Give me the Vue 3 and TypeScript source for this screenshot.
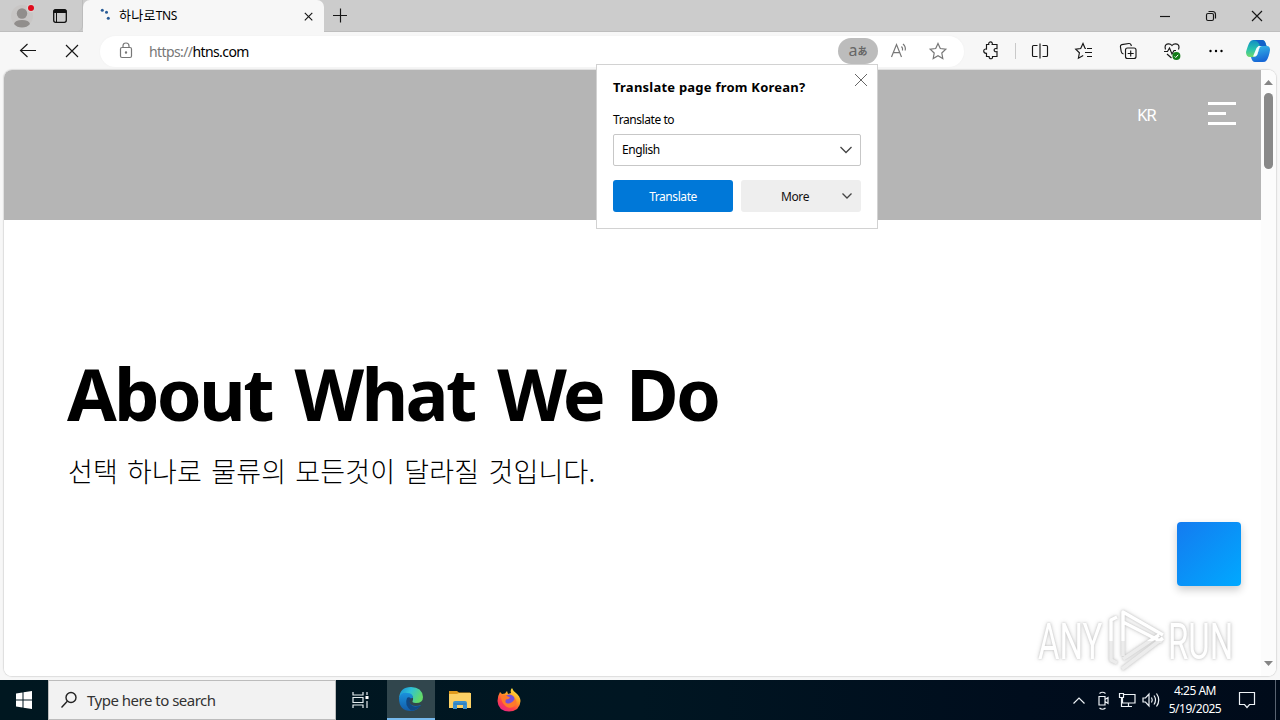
<script setup lang="ts">
interface TrayIcon { name: string; paths: string[] }

const menuBars: string[] = ['wide', 'short', 'wide']
const tray: TrayIcon[] = [
  { name: 'expand', paths: ['M6.500 15.500l5.500-5.500 5.500 5.500'] },
  { name: 'meet', paths: ['M8 8.500h6v8.500h-6zM14 11.500l3-2v6l-3-2M8.500 5.500q3-2.500 6 0M8.500 20q3 2.500 6 0'] },
  { name: 'network', paths: ['M9 6.500h11v8.500H7.500v-5M13.500 15v3.500M10 18.500h7M4.500 5.500h4v4h-4zM6.500 9.500v9H10'] },
  { name: 'volume', paths: ['M4 10h2.500l3.500-4v12l-3.500-4H4zM12.500 9.500q1.500 2.500 0 5M15 7.500q3 4.500 0 9M17.500 5.500q4.500 6.500 0 13'] },
]
</script>

<template>
  <div class="screen">
    <div class="tabstrip">
      <div class="tab-tools">
        <svg class="profile" width="24" height="28" viewBox="0 0 24 28">
          <circle cx="12" cy="15" r="11" fill="#c8c6c5" />
          <circle cx="12" cy="12.500" r="5.200" fill="#918e8c" />
          <path d="M4 23q1-4 8-4t8 4q-3 3.500-8 3.500t-8-3.500z" fill="#918e8c" />
          <circle cx="21" cy="7" r="4.300" fill="#d8d4d2" />
          <circle cx="21" cy="7" r="3" fill="#e00b1c" />
        </svg>
        <svg class="tabs-icon" width="16" height="16" viewBox="0 0 16 16">
          <rect x="1.700" y="1.700" width="12.600" height="12.600" rx="2" fill="none" stroke="#111" stroke-width="1.300" />
          <path d="M1.500 4V3q0-1.500 1.500-1.500h10q1.500 0 1.500 1.500v2H5v9H4V5H1.500z" fill="#111" />
        </svg>
      </div>
      <div class="tab">
        <svg width="16" height="16" viewBox="0 0 16 16" fill="#285b96">
          <circle cx="5.300" cy="2.300" r="1.500" /><circle cx="9.500" cy="4.200" r="1.500" /><circle cx="11.300" cy="10.200" r="1.500" />
        </svg>
        <span class="tab-title"><span class="hangul">하나로</span>TNS</span>
        <svg class="tab-close" width="16" height="16" viewBox="0 0 16 16"><path d="M4.800 4.800l7.500 7.500M12.300 4.800l-7.500 7.500" class="line" /></svg>
      </div>
      <svg class="new-tab" width="16" height="16" viewBox="0 0 16 16"><path d="M1 8.500h14M8.500 1.500v14" class="line" /></svg>
      <div class="window-controls">
        <svg width="46" height="32" viewBox="0 0 46 32"><path d="M18 16.500h10" class="line" /></svg>
        <svg width="46" height="32" viewBox="0 0 46 32"><path d="M20.500 11.500h4q3 0 3 3v4" class="line" /><rect x="18.500" y="13.500" width="7" height="7" rx="1.500" class="line" /></svg>
        <svg width="46" height="32" viewBox="0 0 46 32"><path d="M18 11l10 10M28 11L18 21" class="line" /></svg>
      </div>
    </div>

    <div class="toolbar">
      <svg class="back" width="20" height="20" viewBox="0 0 20 20"><path d="M18 9.500H2.500M9.500 3L2.500 9.500l7 6.500" class="line" /></svg>
      <svg class="stop" width="20" height="20" viewBox="0 0 20 20"><path d="M4 4l12 12M16 4L4 16" class="line" /></svg>
      <div class="address">
        <svg class="lock" width="16" height="18" viewBox="0 0 16 18">
          <rect x="2.500" y="5.500" width="11" height="10" rx="1.500" /><path d="M5 5.500V4q0-3 3-3t3 3v1.500" /><circle cx="8" cy="10.500" r=".6" />
        </svg>
        <span class="url"><span class="scheme">https://</span>htns.com</span>
        <span class="translate-pill"><b>a</b><i>あ</i></span>
        <svg class="read" width="40" height="24" viewBox="0 0 40 24"><path d="M13.500 18l5-12.500L23.500 18M15.300 13.700h6.500M23.500 7.500q1.500 1.500 1 4M25 5q3 2.500 2.200 6.500" /></svg>
        <svg class="star" width="40" height="24" viewBox="0 0 40 24"><path d="M20 4.500l2.300 5 5.500.7-4 3.800 1 5.500-4.800-2.700-4.800 2.700 1-5.500-4-3.800 5.500-.7z" /></svg>
      </div>
      <div class="actions">
        <svg viewBox="0 0 44 24"><path class="line" d="M17.500 5.500h2.300q-.5-1.700.6-2.300 1.600-.8 2.600.3.600.8.200 2H28v4.200q-2.500-.6-2.900 1.200.2 2.500 2.900 1.700v4.900H23.500q.3 2-1.200 2.200-2.300.2-2.200-2.200h-2.600v-3.200q-2.500.2-2.800-2.200.2-2.400 2.800-2z" /></svg>
        <i class="divider"></i>
        <svg viewBox="0 0 44 24"><path class="line" d="M19.500 6.500h-4q-1 0-1 1v9q0 1 1 1h4M24.500 6.500h4q1 0 1 1v9q0 1-1 1h-4M22 4.500v15" /></svg>
        <svg viewBox="0 0 44 24"><path class="line" d="M24 9.500l-1-.2-2-4.800-2.300 5-5 .7 3.700 3.600-1 5.400 4.800-2.600M25 9.500h5M23 13.500h7M25 17.500h5" /></svg>
        <svg viewBox="0 0 44 24"><rect class="line" x="19.500" y="9" width="10.500" height="10.500" rx="2" /><path class="line" d="M24.700 11.500v6M21.700 14.500h6M17.500 15q-2-.5-2.300-2.500l-.8-4.800q-.2-1.700 1.400-2.100l7-1.100q1.800-.2 2.300 1.500l.3 1" /></svg>
        <svg viewBox="0 0 44 24"><path class="line" d="M15.500 10.500q-1.300-4 1.500-5.400 3-1 5 1.400 2-2.400 5-1.400 3 1.400 1.500 5.400M14 12.500h3.500l2-3.500 2.500 6 2-3.500h2M17 15l4.500 4" /><circle cx="26.400" cy="17" r="4" fill="#137b19" /><path d="M24.700 17.500l1 1 2.500-2.700" fill="none" stroke="#fff" /></svg>
        <svg viewBox="0 0 44 24"><circle cx="16.500" cy="12" r="1.200" /><circle cx="22" cy="12" r="1.200" /><circle cx="27.500" cy="12" r="1.200" /></svg>
        <svg class="copilot" viewBox="0 0 24 24">
          <defs>
            <linearGradient id="cp-left" x1="0" y1="0" x2="0" y2="1"><stop stop-color="#118cc5" /><stop offset=".55" stop-color="#28c3ad" /><stop offset="1" stop-color="#70d86b" /></linearGradient>
            <linearGradient id="cp-right" x1="0" y1="0" x2=".3" y2="1"><stop stop-color="#36bde8" /><stop offset="1" stop-color="#1768d6" /></linearGradient>
          </defs>
          <path d="M7 1h9q2.500 0 3.500 3l1 3H16q-2 0-3 3l-1.500 5q-1 3-4 3H4q-4 0-4-5 2-7 3.500-9.500Q4.500 1 7 1z" fill="url(#cp-left)" />
          <path d="M7 1h9q2.500 0 3.500 3l1 3H14q-2-6-7-6z" fill="#1262c9" />
          <path d="M16 7h5q3 0 3 4-1 7-3.500 10.500Q19.500 23 17 23H9q-3 0-4-5h2.500q3 0 4-3l1.500-5q1-3 3-3z" fill="url(#cp-right)" />
          <path d="M10.500 9l2-2h2.500q-1.500 1-2 3l-1.700 5.500q-.8 2-2.800 2H7z" fill="#f4fbff" />
        </svg>
      </div>
    </div>

    <div class="page-frame">
      <main class="page">
        <header class="site-header">
          <span class="lang">KR</span>
          <span class="burger"><i v-for="(b, i) in menuBars" :key="i" :class="b"></i></span>
        </header>
        <section class="about">
          <h1>About What We Do</h1>
          <p>선택 하나로 물류의 모든것이 달라질 것입니다.</p>
        </section>
      </main>
      <div class="scrollbar">
        <svg width="9" height="5" viewBox="0 0 9 5"><path d="M0 5L4.500 0 9 5z" fill="#858585" /></svg>
        <div class="thumb"></div>
        <svg width="9" height="5" viewBox="0 0 9 5"><path d="M0 0h9L4.500 5z" fill="#858585" /></svg>
      </div>
    </div>

    <div class="taskbar">
      <svg class="start" width="48" height="40" viewBox="0 0 48 40" fill="#fff"><path d="M16 13.500l6.500-1v7H16zM23.500 12.300L32 11v8.500h-8.500zM16 20.500h6.500v7l-6.500-1zM23.500 20.500H32V29l-8.500-1.300z" /></svg>
      <div class="search">
        <svg width="18" height="18" viewBox="0 0 18 18"><circle cx="11" cy="6.500" r="5" /><path d="M7.300 10.200L1.500 16.500" /></svg>
        <span>Type here to search</span>
      </div>
      <svg class="task view" width="48" height="40" viewBox="0 0 48 40"><path d="M15.500 12v3h10v-3M15.500 28v-3h10v3M15.500 17.500h10v5h-10zM29.500 12v3M29.500 21v7" /><path class="dot" d="M28 16h3v3h-3z" /></svg>
      <div class="task active">
        <svg width="26" height="26" viewBox="0 0 26 26">
          <defs>
            <linearGradient id="edge-top" x1="0" y1="0" x2="1" y2=".4"><stop stop-color="#178bd5" /><stop offset=".5" stop-color="#2fc2d6" /><stop offset="1" stop-color="#62da69" /></linearGradient>
            <linearGradient id="edge-body" x1="0" y1="0" x2="0" y2="1"><stop stop-color="#1a91dc" /><stop offset="1" stop-color="#125ca9" /></linearGradient>
          </defs>
          <path d="M1 12Q2 1 13 1t12 10q0 6-7 6-5 0-3-3 1-5-5-6-6 0-9 4z" fill="url(#edge-top)" />
          <path d="M1 12q2-6 8-5 6 0 6 5-5 0-4 4 3 6 12 3-4 6-10 6Q1 25 1 12z" fill="url(#edge-body)" />
          <path d="M9 12q-3 7 4 12.500 6 0 10-5-8 3-11-2-1-3 1-5-2-2-4-.5z" fill="#124882" />
        </svg>
      </div>
      <div class="task">
        <svg width="22" height="20" viewBox="0 0 22 20"><path d="M0 1h8l2 1.500h11v4H0z" fill="#e09b1d" /><path d="M0 4h8l2-1h12v15H0z" fill="#fcd165" /><path d="M4 19v-6q0-2 2-2h10q2 0 2 2v6h-4v-4H8v4z" fill="#3a91d0" /><path d="M5 14h12" stroke="#2876b5" /></svg>
      </div>
      <div class="task">
        <svg width="24" height="24" viewBox="0 0 24 24">
          <defs><linearGradient id="fox" x1=".8" y1="0" x2=".2" y2="1"><stop stop-color="#fff044" /><stop offset=".4" stop-color="#ff9b22" /><stop offset=".7" stop-color="#ff4248" /><stop offset="1" stop-color="#e4208c" /></linearGradient></defs>
          <path d="M3 4l2 2 3-.5L10 3l1 3 3-1q-1-3 1-5 1 3 4 5 4 3 4.500 8Q23 23 12 23.500 1 23 .5 13 .5 8 3 4z" fill="url(#fox)" />
          <circle cx="12.300" cy="12" r="5.500" fill="#7650d9" /><path d="M4 8q3-2 6 0l3 1.500q-1 2-4 2-2 4 3 4 4-1 6-5 3 4 0 7-4 4-9 1-5-4-5-10.500z" fill="#ff7a29" />
        </svg>
      </div>
      <div class="tray">
        <svg v-for="icon in tray" :key="icon.name" width="24" height="24" viewBox="0 0 24 24"><path v-for="d in icon.paths" :key="d" :d="d" /></svg>
      </div>
      <div class="clock"><span>4:25 AM</span><span>5/19/2025</span></div>
      <svg class="notify" width="24" height="24" viewBox="0 0 24 24"><path d="M4.500 4.500h15v12h-5l-2.500 3-2.500-3h-5z" /></svg>
      <i class="desktop-edge"></i>
    </div>

    <div class="popup">
      <div class="popup-title">Translate page from Korean?</div>
      <svg class="popup-close" width="14" height="14" viewBox="0 0 14 14"><path d="M1 1l12 12M13 1L1 13" /></svg>
      <label>Translate to</label>
      <div class="select"><span>English</span><svg width="14" height="8" viewBox="0 0 14 8"><path d="M1.500 1L7 6.500 12.500 1" /></svg></div>
      <div class="buttons">
        <button class="primary"><span>Translate</span></button>
        <button class="more"><span>More</span><svg width="12" height="8" viewBox="0 0 12 8"><path d="M1.500 1.500L6 6l4.500-4.500" /></svg></button>
      </div>
    </div>

    <div class="chat"></div>
    <svg class="watermark" width="220" height="74" viewBox="0 0 220 74">
      <defs>
        <linearGradient id="mark" x1="0" y1="0" x2="0" y2="70" gradientUnits="userSpaceOnUse"><stop offset=".51" stop-color="#fff" /><stop offset=".52" stop-color="#ececec" /></linearGradient>
      </defs>
      <g class="mark-text" fill="url(#mark)">
        <text transform="translate(3 54) scale(.66 1)">ANY</text>
        <text transform="translate(133 54) scale(.66 1)">RUN</text>
      </g>
      <g class="mark-logo">
        <path d="M88 51V7l40 23M88 17l39 20M128 33L87 64M124 30L88 54" />
        <path d="M82 12l-6 3v40l6 3" />
      </g>
    </svg>
  </div>
</template>

<style>
body { margin: 0; overflow: hidden; }
</style>

<style scoped>
* { box-sizing: border-box; }
svg { display: block; flex: none; }
.screen { position: relative; width: 1280px; height: 720px; overflow: hidden; display: flex; flex-direction: column; background: #f7f7f7; font-family: "Noto Sans", "Noto Sans CJK KR", sans-serif; color: #000; white-space: nowrap; }
.line { fill: none; stroke: #161616; stroke-width: 1.15; }
.tabstrip { height: 32px; flex: none; display: flex; background: #ccc; border-bottom: 1px solid #bebebe; }
.tab-tools { width: 83px; display: flex; border-right: 1px solid #bcbcbc; border-radius: 0 0 5px 0; }
.profile { margin: 1px 0 0 10px; }
.tabs-icon { margin: 8px 0 0 18px; }
.tab { width: 241px; height: 32px; background: #f7f7f7; border-radius: 7px 7px 0 0; display: flex; align-items: center; padding: 0 8px 0 14px; }
.tab-title { font-size: 12px; line-height: 16px; letter-spacing: -.35px; margin: -2px 0 0 6px; flex: 1; }
.hangul { font-size: 13px; letter-spacing: .25px; }
.new-tab { margin: 7px 0 0 8px; }
.window-controls { display: flex; margin-left: auto; }
.toolbar { height: 38px; flex: none; display: flex; align-items: center; padding-left: 18px; }
.stop { margin-left: 24px; }
.address { width: 864px; height: 31px; margin-left: 18px; background: #fff; border-radius: 16px; display: flex; align-items: center; padding: 0 6px 0 18px; box-shadow: 0 0 2px #eee; }
.lock, .read, .star { fill: none; stroke: #777; stroke-width: 1.200; }
.url { font-size: 14px; letter-spacing: -.6px; margin-left: 15px; flex: 1; }
.scheme { color: #777; }
.translate-pill { width: 40px; height: 26px; border-radius: 13px; background: #bcbcbc; color: #666; display: flex; justify-content: center; align-items: center; line-height: 1; }
.translate-pill b { font-weight: 400; font-size: 16px; margin-top: -3px; }
.translate-pill i { font-style: normal; font-size: 10px; font-weight: 700; font-family: "Noto Sans CJK JP", sans-serif; }
.actions { display: flex; align-items: center; margin-left: 5px; }
.actions svg { width: 44px; height: 24px; }
.divider { width: 1px; height: 16px; background: #c9c9c9; margin: 0 2px; }
.actions .copilot { width: 24px; height: 24px; margin-left: 8px; }
.page-frame { width: 1272px; height: 606px; flex: none; margin: 0 0 4px 4px; display: flex; border-radius: 8px; overflow: hidden; background: #fff; box-shadow: 0 0 1px 1px #ddd; }
.page { width: 1257px; background: #fff; }
.site-header { height: 150px; background: #b5b5b5; display: flex; align-items: flex-start; padding-left: 1132px; }
.lang { width: 72px; padding-left: 1px; margin-top: 32px; color: #fff; font-size: 17px; line-height: 26px; letter-spacing: -1.2px; font-weight: 400; }
.burger { display: flex; flex-direction: column; gap: 7px; margin-top: 32px; }
.burger i { height: 3px; background: #fff; }
.wide { width: 28px; }
.short { width: 18px; }
.about { padding: 124px 0 0 63px; }
h1 { margin: 0; font-size: 72px; line-height: 98px; font-weight: 700; letter-spacing: -2.75px; word-spacing: 7px; }
p { margin: 11px 0 0 1px; font-family: "Noto Sans CJK KR", sans-serif; font-size: 27px; line-height: 36px; font-weight: 300; letter-spacing: .15px; word-spacing: 3px; }
.scrollbar { width: 15px; background: #fcfcfc; display: flex; flex-direction: column; align-items: center; padding: 10px 0 10px; }
.thumb { width: 9px; height: 76px; margin-top: 8px; margin-bottom: auto; border-radius: 5px; background: #898989; }
.taskbar { height: 40px; flex: none; display: flex; align-items: center; background: linear-gradient(90deg, #001720, #001622 50%, #000d1d 80%, #000b1a); }
.search { width: 288px; height: 40px; background: #f2f2f2; border: 1px solid #bcbcbc; display: flex; align-items: center; padding-left: 11px; font-size: 15px; color: #333; }
.search span { margin-left: 9px; letter-spacing: -.5px; }
.search svg { fill: none; stroke: #222; stroke-width: 1.400; }
.task { width: 49px; height: 40px; display: flex; align-items: center; justify-content: center; }
.view { width: 51px; fill: none; stroke: #e4edf0; stroke-width: 1.200; }
.dot { fill: #fff; stroke: none; }
.active { width: 48px; background: #31464d; border-bottom: 2px solid #76b9ed; }
.tray { display: flex; margin-left: auto; }
.tray svg, .notify { fill: none; stroke: #edf2f6; stroke-width: 1.200; }
.clock { width: 66px; display: flex; flex-direction: column; align-items: center; color: #fff; font-size: 12px; line-height: 18px; margin-left: -1px; letter-spacing: -.5px; }
.notify { margin: 0 16px 0 7px; }
.desktop-edge { width: 1px; height: 40px; background: #596371; margin-right: 4px; }
.popup { position: absolute; left: 596px; top: 64px; width: 282px; height: 165px; background: #fff; border: 1px solid #d2d2d2; padding: 12px 16px; display: flex; flex-direction: column; }
.popup-title { font-size: 13px; line-height: 20px; font-weight: 700; letter-spacing: .23px; }
.popup-close { position: absolute; right: 9px; top: 8px; fill: none; stroke: #666; }
label { margin-top: 14px; font-size: 12px; line-height: 17px; letter-spacing: -.43px; }
.select { height: 32px; flex: none; margin-top: 6px; border: 1px solid #c7c7c7; border-radius: 2px; display: flex; align-items: center; justify-content: space-between; padding: 0 7px 1px 8px; font-size: 12px; letter-spacing: -.43px; }
.select svg, .more svg { fill: none; stroke: #444; stroke-width: 1.300; }
.buttons { display: flex; gap: 8px; margin-top: 14px; }
button { width: 120px; height: 32px; border: 0; border-radius: 3px; padding: 0; font: 400 12px "Noto Sans", sans-serif; letter-spacing: -.43px; display: flex; align-items: center; justify-content: center; }
.primary { color: #fff; background: #0078d8; }
.more { background: #eee; color: #111; justify-content: flex-end; padding-right: 8px; gap: 32px; }
.chat { position: absolute; left: 1177px; top: 522px; width: 64px; height: 64px; border-radius: 4px; background: linear-gradient(135deg, #147bf0, #00a9ff); box-shadow: 0 4px 8px rgba(0,0,0,.2); }
.watermark { position: absolute; left: 1035px; top: 605px; filter: drop-shadow(0 0 1px #c4c4c4) drop-shadow(0 0 2px #ddd); }
.mark-text text { font: 400 50px Roboto, sans-serif; }
.mark-logo path { fill: none; stroke: url(#mark); stroke-width: 3.500; stroke-linejoin: round; }
</style>
